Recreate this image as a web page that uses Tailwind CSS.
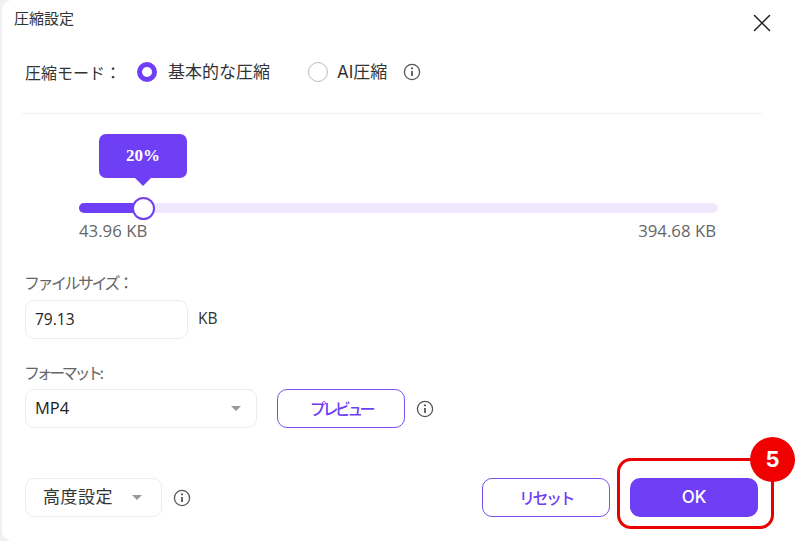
<!DOCTYPE html>
<html lang="ja">
<head>
  <meta charset="UTF-8">
  <title>圧縮設定</title>
  <script src="https://cdn.jsdelivr.net/npm/@tailwindcss/browser@4"></script>
</head>
<body class="bg-white overflow-hidden font-['Inter','Noto_Sans_CJK_JP',sans-serif] text-[#333]">
<div class="w-[800px] h-[541px] overflow-hidden bg-[#f0f0f0]">
  <div class="w-[798px] h-[541px] ml-[2px] pl-[23px] bg-white rounded-tl-[10px] rounded-bl-[10px]">

    <!-- title -->
    <div class="h-[47px] flex justify-between pr-[29px]">
      <div class="-ml-[11px] pt-[10px] text-[15px] leading-[18px] text-[#333]">圧縮設定</div>
      <svg class="mt-[14px]" width="18" height="18" viewBox="0 0 18 18" fill="none" stroke="#222" stroke-width="1.5" stroke-linecap="round"><path d="M1.5 1.5 16.5 16.5M16.5 1.5 1.5 16.5"/></svg>
    </div>

    <!-- mode -->
    <div class="h-[50px] flex items-center text-[17px]">
      <span class="w-[112px] pt-px text-[16px]">圧縮モード：</span>
      <span class="w-[20px] h-[20px] rounded-full border-[5px] border-[#6f3ff5] bg-white"></span>
      <span class="ml-[11px] w-[140px] pt-px">基本的な圧縮</span>
      <span class="w-[20px] h-[20px] rounded-full border border-[#bbb] bg-white"></span>
      <span class="ml-[9px] w-[52px] pt-px whitespace-nowrap">AI圧縮</span>
      <svg class="ml-[14px]" width="18" height="18" viewBox="0 0 18 18" fill="none" stroke="#555" stroke-width="1.3"><circle cx="9" cy="9" r="7.6"/><path d="M9 8v5" stroke-width="1.8"/><circle cx="9" cy="5.3" r="1.1" fill="#555" stroke="none"/></svg>
    </div>

    <div class="w-[740px] -ml-[3px] mt-[16px] border-t border-[#f1f1f1]"></div>

    <!-- slider -->
    <div class="relative ml-[54px] w-[639px] mt-[89px]">
      <div class="h-[10px] rounded-full bg-[#efe7fd]">
        <div class="h-[10px] w-[64px] rounded-l-full bg-[#6f3ff5]"></div>
      </div>
      <div class="absolute left-[53px] top-[-6px] w-[23px] h-[23px] rounded-full bg-white border-[2px] border-[#6f3ff5]"></div>
      <div class="absolute left-[20px] top-[-69px] w-[88px] h-[44px] rounded-[7px] bg-[#6f3ff5] flex items-center justify-center font-['Liberation_Serif',serif] text-[17px] font-bold text-white">
        20%
        <span class="absolute left-[36px] top-[44px] w-0 h-0 border-x-[8px] border-x-transparent border-t-[8px] border-t-[#6f3ff5]"></span>
      </div>
      <div class="flex justify-between mt-[8px] font-['Open_Sans',sans-serif] text-[16.8px] leading-[20px] text-[#666]">
        <span>43.96 KB</span>
        <span class="pr-[2px]">394.68 KB</span>
      </div>
    </div>

    <!-- file size -->
    <div class="mt-[32px] -ml-px text-[16px] tracking-[-2.5px] leading-[20px] text-[#666]">ファイルサイズ：</div>
    <div class="mt-[7px] flex items-center">
      <div class="w-[163px] h-[39px] flex items-center pl-[9px] rounded-[9px] border border-[#ececec] font-['Open_Sans',sans-serif] text-[15.5px] text-[#222]">79.13</div>
      <span class="ml-[10px] -mt-[2px] font-['Open_Sans',sans-serif] text-[15.5px] text-[#333]">KB</span>
    </div>

    <!-- format -->
    <div class="mt-[24px] -ml-px text-[16px] tracking-[-3.4px] leading-[20px] text-[#666]">フォーマット:</div>
    <div class="mt-[6px] flex items-center">
      <div class="w-[232px] h-[39px] flex items-center justify-between pl-[9px] pr-[15px] rounded-[9px] border border-[#ececec] font-['Open_Sans',sans-serif] text-[16.5px] text-[#222]">
        MP4
        <span class="w-0 h-0 border-x-[5px] border-x-transparent border-t-[5px] border-t-[#999]"></span>
      </div>
      <button class="ml-[20px] w-[128px] h-[39px] rounded-[10px] border-[1.5px] border-[#7a50f0] text-[16px] tracking-[-3.6px] font-medium text-[#6f3ff5]">プレビュー</button>
      <svg class="ml-[11px]" width="18" height="18" viewBox="0 0 18 18" fill="none" stroke="#555" stroke-width="1.3"><circle cx="9" cy="9" r="7.6"/><path d="M9 8v5" stroke-width="1.8"/><circle cx="9" cy="5.3" r="1.1" fill="#555" stroke="none"/></svg>
    </div>

    <!-- footer -->
    <div class="mt-[50px] flex items-center">
      <div class="w-[137px] h-[39px] flex items-center justify-between pl-[17px] pr-[19px] rounded-[9px] border border-[#ececec] text-[17px] tracking-[0.5px] text-[#333]">
        高度設定
        <span class="w-0 h-0 border-x-[5px] border-x-transparent border-t-[5px] border-t-[#999]"></span>
      </div>
      <svg class="ml-[11px]" width="18" height="18" viewBox="0 0 18 18" fill="none" stroke="#555" stroke-width="1.3"><circle cx="9" cy="9" r="7.6"/><path d="M9 8v5" stroke-width="1.8"/><circle cx="9" cy="5.3" r="1.1" fill="#555" stroke="none"/></svg>
      <button class="ml-[291px] w-[128px] h-[39px] rounded-[10px] border-[1.5px] border-[#7a50f0] text-[16px] tracking-[-2.5px] font-medium text-[#6f3ff5]">リセット</button>
      <div class="relative ml-[20px]">
        <button class="block w-[128px] h-[39px] rounded-[10px] bg-[#6f3ff5] text-[17px] font-medium text-white">OK</button>
        <div class="absolute left-[-13px] top-[-20px] w-[157px] h-[71px] rounded-[14px] border-[3px] border-[#ea0000]"></div>
        <div class="absolute left-[120px] top-[-41px] w-[45px] h-[45px] rounded-full bg-[#f00000] flex items-center justify-center text-[22px] font-bold text-white">5</div>
      </div>
    </div>
  </div>
</div>
</body>
</html>
